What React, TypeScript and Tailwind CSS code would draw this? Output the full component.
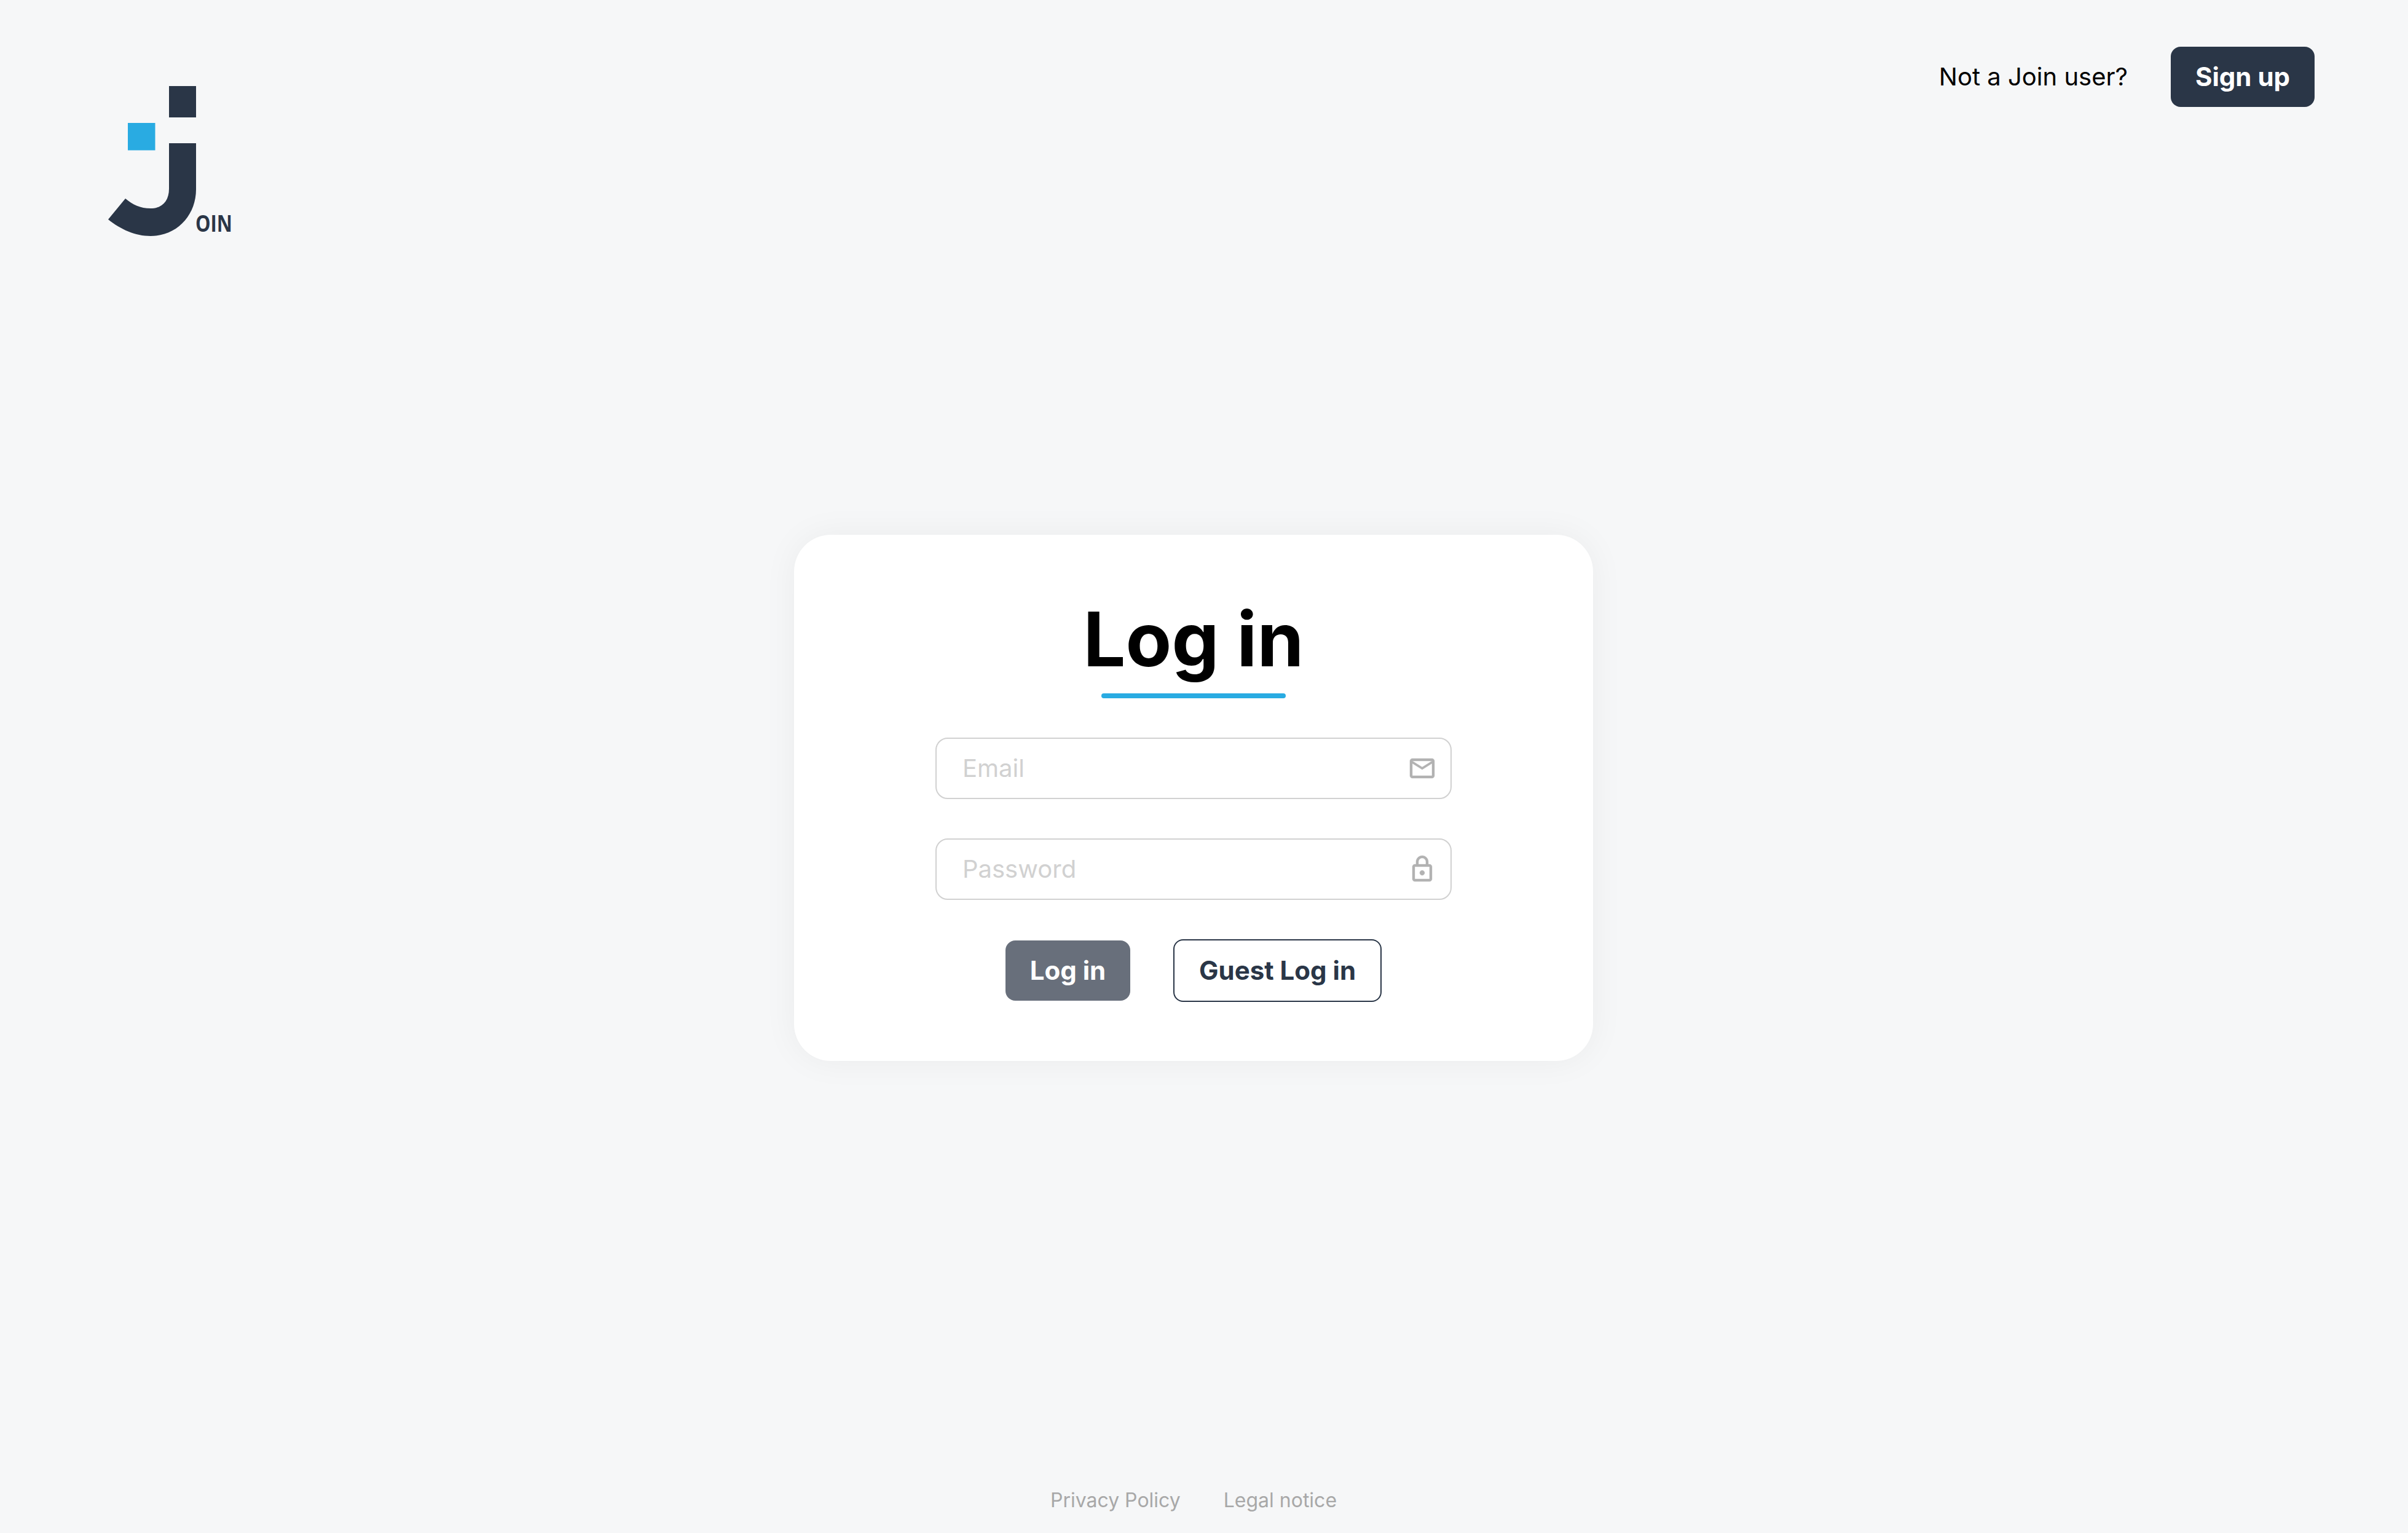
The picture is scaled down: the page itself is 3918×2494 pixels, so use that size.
import React, { useState } from 'react';

const Logo: React.FC = () => (
  <svg className="overflow-visible" width="210" height="244" viewBox="0 0 210 244" fill="none">
    <rect x="99" y="0" width="44" height="51" fill="#2A3647" />
    <rect x="32" y="60" width="44.5" height="44.5" fill="#29ABE2" />
    <path
      d="M99 93H143V168C143 210 112 244 69 244C44 244 20 233 0 217L28 183C40 193 52 199 69 199C88 199 99 187 99 167Z"
      fill="#2A3647"
    />
    <text
      x="142"
      y="237"
      textLength="60"
      lengthAdjust="spacingAndGlyphs"
      fill="#2A3647"
      className="font-['Open_Sans',sans-serif] text-[38px] font-bold"
    >
      OIN
    </text>
  </svg>
);

const MailIcon: React.FC = () => (
  <svg className="size-12 shrink-0" viewBox="0 0 24 24" fill="#B2B2B2" stroke="#B2B2B2" strokeWidth="0.2">
    <path d="M4 20c-.55 0-1.02-.2-1.41-.59C2.2 19.02 2 18.55 2 18V6c0-.55.2-1.02.59-1.41C2.98 4.2 3.45 4 4 4h16c.55 0 1.02.2 1.41.59.39.39.59.86.59 1.41v12c0 .55-.2 1.02-.59 1.41-.39.39-.86.59-1.41.59H4Zm8-7L4 8v10h16V8l-8 5Zm0-2 8-5H4l8 5Z" />
  </svg>
);

const LockIcon: React.FC = () => (
  <svg className="size-12 shrink-0" viewBox="0 0 24 24" fill="#B2B2B2" stroke="#B2B2B2" strokeWidth="0.2">
    <path d="M6 22c-.55 0-1.02-.2-1.41-.59C4.2 21.02 4 20.55 4 20V10c0-.55.2-1.02.59-1.41C4.98 8.2 5.45 8 6 8h1V6c0-1.38.49-2.56 1.46-3.54C9.44 1.49 10.62 1 12 1s2.56.49 3.54 1.46C16.51 3.44 17 4.62 17 6v2h1c.55 0 1.02.2 1.41.59.39.39.59.86.59 1.41v10c0 .55-.2 1.02-.59 1.41-.39.39-.86.59-1.41.59H6Zm0-2h12V10H6v10Zm6-3c.55 0 1.02-.2 1.41-.59.39-.39.59-.86.59-1.41s-.2-1.02-.59-1.41C13.02 13.2 12.55 13 12 13s-1.02.2-1.41.59c-.39.39-.59.86-.59 1.41s.2 1.02.59 1.41c.39.39.86.59 1.41.59ZM9 8h6V6c0-.83-.29-1.54-.88-2.13C13.54 3.29 12.83 3 12 3s-1.54.29-2.13.87C9.29 4.46 9 5.17 9 6v2Z" />
  </svg>
);

const App: React.FC = () => {
  const [email, setEmail] = useState('');
  const [password, setPassword] = useState('');

  return (
    <div className="flex h-screen flex-col bg-[#F6F7F8] pr-[34px] font-[Inter,sans-serif] text-black">
      {/* Header */}
      <header className="flex h-[870px] shrink-0 items-start justify-between pt-[76px] pr-[118px] pl-44">
        <div className="pt-16">
          <Logo />
        </div>
        <div className="flex items-center gap-[70px]">
          <span className="text-[40px]">Not a Join user?</span>
          <button className="h-[98px] w-[234px] rounded-2xl bg-[#2A3647] pb-0.5 text-[42px] font-bold text-white">
            Sign up
          </button>
        </div>
      </header>

      {/* Login card */}
      <main className="flex grow justify-center">
        <form
          className="flex h-[856px] w-[1300px] flex-col items-center rounded-[60px] bg-white shadow-[0_0_56px_rgba(0,0,0,0.05)]"
          onSubmit={(e) => e.preventDefault()}
        >
          <h1 className="mt-24 text-[122px] leading-[148px] font-bold">Log in</h1>
          <div className="mt-3.5 h-2 w-[300px] rounded-full bg-[#29ABE2]"></div>

          <div className="mt-16 flex w-[840px] flex-col gap-16">
            <label className="flex h-[100px] items-center rounded-[20px] border-2 border-[#D1D1D1] pr-[22px] pl-[42px]">
              <input
                type="email"
                placeholder="Email"
                value={email}
                onChange={(e) => setEmail(e.target.value)}
                className="min-w-0 grow text-[40px] outline-none placeholder:text-[#D1D1D1]"
              />
              <MailIcon />
            </label>
            <label className="flex h-[100px] items-center rounded-[20px] border-2 border-[#D1D1D1] pr-[22px] pl-[42px]">
              <input
                type="password"
                placeholder="Password"
                value={password}
                onChange={(e) => setPassword(e.target.value)}
                className="min-w-0 grow text-[40px] outline-none placeholder:text-[#D1D1D1]"
              />
              <LockIcon />
            </label>
          </div>

          <div className="mt-16 flex items-center gap-[70px]">
            <button className="h-[98px] w-[203px] rounded-2xl bg-[#686F7B] pb-0.5 text-[42px] font-bold text-white">
              Log in
            </button>
            <button className="h-[102px] w-[339px] rounded-2xl border-2 border-[#2A3647] pb-0.5 text-[42px] font-bold text-[#2A3647]">
              Guest Log in
            </button>
          </div>
        </form>
      </main>

      {/* Footer links */}
      <footer className="flex justify-center gap-[70px] pb-7 text-[32px] leading-[50px] text-[#A8A8A8]">
        <a href="#privacy">Privacy Policy</a>
        <a href="#legal">Legal notice</a>
      </footer>
    </div>
  );
};

export default App;
